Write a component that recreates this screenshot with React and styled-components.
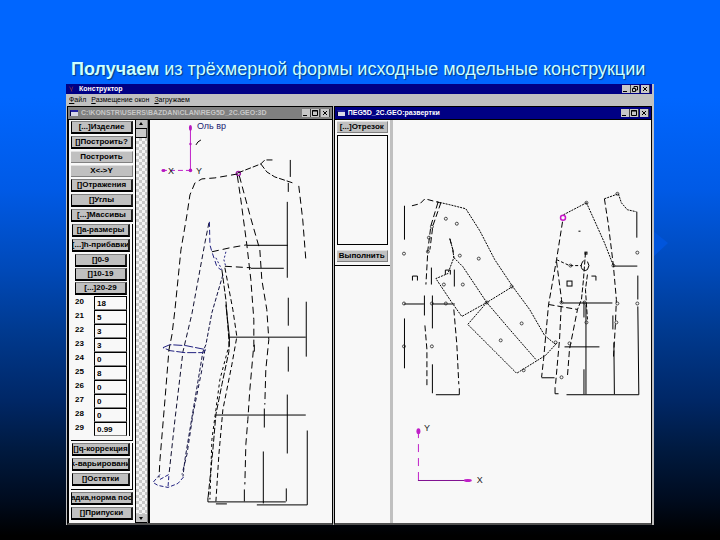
import React, { useState } from 'react';
import styled, { createGlobalStyle } from 'styled-components';

const buttonsTop = ['[...]Изделие', '[]Построить?'];
const buttonsFlat = ['Построить', 'X<->Y'];
const buttonsMid = ['[]Отражения', '[]Углы', '[...]Массивы'];
const ranges = ['[]0-9', '[]10-19', '[...]20-29'];
const initFields = {
	20: '18',
	21: '5',
	22: '3',
	23: '3',
	24: '0',
	25: '8',
	26: '0',
	27: '0',
	28: '0',
	29: '0.99',
};

const Controls = ({ restore }) => (
	<ControlRow>
		<Control aria-label='Minimize'>
			<svg viewBox='0 0 8 8' width='8' height='8'>
				<path d='M1 6.5h4' />
			</svg>
		</Control>
		<Control aria-label='Maximize'>
			<svg viewBox='0 0 8 8' width='8' height='8'>
				{restore ? (
					<path d='M3 3.5V1.5H6.5V5H5M1.5 3.5H4.5V6.5H1.5z' />
				) : (
					<path d='M1.5 1.5H6.5V6.5H1.5zM1 2h6' />
				)}
			</svg>
		</Control>
		<Control $apart aria-label='Close'>
			<svg viewBox='0 0 8 8' width='8' height='8'>
				<path d='M2 2l4 4M6 2l-4 4' />
			</svg>
		</Control>
	</ControlRow>
);

const Model = () => (
	<Drawing viewBox='150 120 182 402' aria-label='3D'>
		<g stroke='#c020c8'>
			<path d='M190.500 127V170.500' />
			<path d='M162 170.500H190' strokeDasharray='5 3' />
		</g>
		<g fill='#b818c0' stroke='none'>
			<ellipse cx='190.500' cy='128' rx='1.500' ry='3' />
			<circle cx='190.500' cy='144' r='1.200' />
			<circle cx='190.500' cy='170.500' r='1.800' />
			<ellipse cx='163.500' cy='170.500' rx='2' ry='1.500' />
		</g>
		<circle cx='238.500' cy='173.500' r='2' stroke='#a020a8' strokeWidth='1.500' />
		<path d='M196 145l2-3 3-2' />
		<g stroke='#202080' fill='none' strokeDasharray='5 3'>
			<path d='M209 223L205 243 192 314 183 352 175 420 169 475' stroke='#101030' />
			<path d='M209.500 222L210 245 212 252 217 267 221 270' />
			<path d='M226 252L224 260 226 267M216 258L222 270' strokeDasharray='2 2' />
			<path d='M223 275L212 313 206 345 203 352 195 400 185 460 183 477' strokeDasharray='4 2' stroke='#101040' />
			<path d='M205 350L202 370 193 415 187 455 182 475' strokeDasharray='4 3' stroke='#101040' />
			<path d='M163 348L170 345 186 346 206 350 203 353 185 353 170 351 163 348' strokeDasharray='9 2' />
			<path d='M160 475L153 483 158 486 168 488 178 484 185 476M160 480L169 475 168 488' strokeDasharray='4 2' />
		</g>
		<g stroke='#000' fill='none' strokeDasharray='7 4'>
			<path d='M238 174L215 178 202 179 195 183 190 195 187 215 181 250 175 310 172 335 169 350 165 400 160 460 159 478' />
			<path d='M237.500 176L241 200 247 245 251 280 254 320 254 345 250 390 248 420 246 445 245 485' />
			<path d='M239.500 176L250 215 260 250 262 280 267 310 269 340 266 370 265 405' />
			<path d='M222 270L226 300 229 340 229 352 222 385 216 415 213 450 208 500' strokeDasharray='6 2' />
			<path d='M225 268L233 310 237 337 232 365 223 410 219 455 216 502' strokeDasharray='5 3' />
			<path d='M228 350L220 380 216 410 212 440 210 500' strokeDasharray='3 3' />
			<path d='M238 173L261 164 265 160H273M261 164L267 172 275 177 293 183' strokeDasharray='6 2' />
			<path d='M212 252L230 248 247 245M225 266.500L251 268' />
			<path d='M299 186L303 220 306 259' />
		</g>
		<path
			stroke='#000'
			fill='none'
			d='M247 245.500H288M251 268.500H284M290.500 160V177M288.500 183V192M287.500 202V278M288.500 298V326M288.500 347V372M287.500 395V454M286.500 489V502M306.500 302V357M229 337.500H306M216 415.500H306M264.500 409V428M263.500 452V504M307.500 431V505.500H257M208 498V502.500H286M216 504.500H227M244.500 490V502M226 305L229.500 337V347M254.500 345V352'
		/>
		<AxisText x='197' y='129' $navy>Оль вр</AxisText>
		<AxisText x='168' y='174'>X</AxisText>
		<AxisText x='196' y='174'>Y</AxisText>
	</Drawing>
);

const points = [
	[404, 254], [404, 304], [404, 347], [432, 347], [432, 304], [446, 219], [457, 224],
	[460, 256], [479, 259], [463, 285], [444, 285], [446, 304], [522, 324], [501, 341],
	[524, 371], [512, 287], [487, 303], [432, 227], [429, 238], [428, 252], [587, 323],
	[617, 323], [618, 304], [638, 304], [638, 253], [562, 303], [562, 378], [570, 344],
	[585, 303], [614, 266], [556, 343], [571, 266], [587, 203], [618, 194],
];

const Flat = () => (
	<Drawing viewBox='393 120 259 404' aria-label='развертки'>
		<g stroke='#000' fill='none' strokeDasharray='2 1'>
			<path d='M437 202L450 205 466 209 480 231 495 260 513 287 530 310 545 336 556 345' />
			<path d='M454 258L463 267 487 303 510 330 537 361M450 239L453 250 454 258 448 274 436 279 452 303 462 317 487 303 513 287' />
			<path d='M487 303L468 325 495 352 517 374 546 356 558 343' />
			<path d='M587 203L605 243 614 266M564 215L587 203 M605 199L619 194 622 203 628 210 637 212' />
			<path d='M557 260L570 266 582 266' strokeDasharray='3 2' />
		</g>
		<g stroke='#000' fill='none' strokeDasharray='6 3'>
			<path d='M412 206L420 204 425 199 440 203' />
			<path d='M438 203L431 226 428 250 426 285' />
			<path d='M441 203L433 226 430 250' />
			<path d='M450 239L453 250 454 258' />
			<path d='M425 326L427 350 427 388M454 310L457 345 459 385' />
			<path d='M563 222L557 260 549 305 544 360 542 378' />
			<path d='M557 262L562 300 560 340 556 385' />
			<path d='M549 305L578 310 570 350 568 376' />
			<path d='M605 199L609 225 614 266 617 300 616 325 614 360' />
			<path d='M586 253L584 280 582 300 578 310M588 275L586 290 588 320' strokeDasharray='5 2' />
		</g>
		<path
			stroke='#000'
			fill='none'
			d='M404.500 206V240M404.500 319V369M404 304.500H424M424.500 296V316M432 304.500H455M432.500 296V329M431.500 268V285M432.500 365V394M436 395.500H459.500V389M454.500 270V287M412.500 281V276.500H417.500V281M445.500 275V270.500H450.500V275M614 266.500H638M637.500 212V238M638.500 276V300M638.500 307L639.500 395.500H567M563 303.500H613M565 347.500H600M584.500 302V318M586.500 305V395M584.500 370V395M613.500 316V330M614.500 343L615 395M542 378.500H555M555.500 388V394.500H559M592 276.500H596.500V281'
		/>
		<g stroke='#000' fill='none'>
			<rect x='567.500' y='281.500' width='5' height='5' />
			<rect x='585.500' y='252.500' width='2' height='2' />
			<path d='M584 261q-4 5-1 9q3 2 5 0q3-4 0-8M579 231.500h2' />
		</g>
		{points.map(([x, y]) => (
			<circle key={`${x}-${y}`} cx={x} cy={y} r='1.500' stroke='#222' strokeWidth='0.800' fill='none' />
		))}
		<circle cx='563.500' cy='218' r='2.500' stroke='#c818c8' strokeWidth='1.500' fill='none' />
		<g stroke='#c020c8'>
			<path d='M418.500 481V432' strokeDasharray='8 6' />
			<path d='M418 481.500H468' stroke='#801090' />
		</g>
		<g fill='#c020c8' stroke='none'>
			<ellipse cx='418.500' cy='432' rx='2' ry='3' />
			<ellipse cx='468' cy='481.500' rx='4' ry='1.500' />
		</g>
		<AxisText x='424' y='432'>Y</AxisText>
		<AxisText x='477' y='484'>X</AxisText>
	</Drawing>
);

const App = () => {
	const [fields, setFields] = useState(initFields);

	return (
		<Page>
			<GlobalStyle />
			<Heading>
				<b>Получаем</b> из трёхмерной формы исходные модельные конструкции
			</Heading>
			<Stage>
				<Pointer viewBox='0 0 15 26'>
					<path d='M0 0L15 12 0 26z' fill='#0055dc' />
				</Pointer>
				<Main>
					<TitleBar $main>
						<AppIcon viewBox='0 0 10 8'>
							<path d='M2 1l3 6M6 1L4 7' stroke='#803050' />
						</AppIcon>
						<Caption>Конструктор</Caption>
						<Controls restore />
					</TitleBar>
					<MenuBar>
						<MenuItem>Файл</MenuItem>
						<MenuItem>Размещение окон</MenuItem>
						<MenuItem>Загружаем</MenuItem>
					</MenuBar>
					<Windows>
						<Child>
							<TitleBar $inactive>
								<SysIcon />
								<Caption>C:\KONSTR\USERS\BAZDAN\CLAN\REG5D_2C.GEO:3D</Caption>
								<Controls />
							</TitleBar>
							<Body>
								<Side>
									{buttonsTop.map((el) => (
										<Tool key={el}>{el}</Tool>
									))}
									{buttonsFlat.map((el) => (
										<Tool key={el} $flat>
											{el}
										</Tool>
									))}
									{buttonsMid.map((el) => (
										<Tool key={el}>{el}</Tool>
									))}
									<Group>
										<Tool>[]a-размеры</Tool>
										<Tool>[...]h-прибавки</Tool>
										<Range>
											{ranges.map((el) => (
												<Tool key={el}>{el}</Tool>
											))}
											{Object.keys(fields).map((key) => (
												<Field key={key}>
													<span>{key}</span>
													<input
														value={fields[key]}
														onChange={(e) =>
															setFields({ ...fields, [key]: e.target.value })
														}
													/>
												</Field>
											))}
										</Range>
									</Group>
									<Group $last>
										<Tool>[]q-коррекция</Tool>
										<Tool>k-варьировани</Tool>
										<Tool>[]Остатки</Tool>
									</Group>
									<Tool>адка,норма пос</Tool>
									<Tool>[]Припуски</Tool>
								</Side>
								<Scroll>
									<ScrollButton aria-label='Up'>
										<svg viewBox='0 0 8 8' width='8' height='8'>
											<path d='M4 2L6 5H2z' />
										</svg>
									</ScrollButton>
									<Thumb />
									<Track />
									<ScrollButton aria-label='Down'>
										<svg viewBox='0 0 8 8' width='8' height='8'>
											<path d='M4 6L6 3H2z' />
										</svg>
									</ScrollButton>
								</Scroll>
								<Canvas>
									<Model />
								</Canvas>
							</Body>
						</Child>
						<Child $wide>
							<TitleBar>
								<SysIcon />
								<Caption>ПEG5D_2C.GEO:развертки</Caption>
								<Controls />
							</TitleBar>
							<Body>
								<Panel>
									<PanelTop>
										<Tool $flat>[...]Отрезок</Tool>
										<List />
										<Tool $flat>Выполнить</Tool>
									</PanelTop>
								</Panel>
								<Canvas $plain>
									<Flat />
								</Canvas>
							</Body>
						</Child>
					</Windows>
				</Main>
			</Stage>
		</Page>
	);
};

const GlobalStyle = createGlobalStyle`
	* {
		box-sizing: border-box;
	}
	body {
		margin: 0;
		font-family: 'Liberation Sans', Arial, sans-serif;
	}
`;

const Page = styled.div`
	min-height: 100vh;
	padding: 58px 66px 16px;
	display: flex;
	flex-direction: column;
	background: linear-gradient(
		#0066ff 18%,
		#005ae6 35%,
		#0049b8 50%,
		#003a90 61%,
		#002766 74%,
		#001a40 83%,
		#000c20 92%,
		#000000 99%
	);
`;

const Heading = styled.h1`
	margin: 0;
	padding-left: 5px;
	height: 26px;
	line-height: 23px;
	font-size: 18px;
	font-weight: normal;
	white-space: nowrap;
	color: #ccffff;
	text-shadow: 1px 1px 1px #003a80;
`;

const Stage = styled.div`
	position: relative;
	flex: 1;
	display: flex;
`;

const Pointer = styled.svg`
	position: absolute;
	left: 100%;
	top: 147px;
	width: 14px;
	height: 26px;
`;

const Main = styled.div`
	flex: 1;
	min-width: 0;
	display: flex;
	flex-direction: column;
	background-color: #c0c0c0;
	border-right: 2px solid #c0c0c0;
`;

const TitleBar = styled.div`
	display: flex;
	align-items: center;
	height: ${(p) => (p.$main ? 10 : 12)}px;
	padding: 0 2px;
	gap: 3px;
	color: ${(p) => (p.$inactive ? '#c8c8c8' : '#ffffff')};
	background-color: ${(p) => (p.$inactive ? '#808080' : '#000084')};
`;

const Caption = styled.div`
	flex: 1;
	min-width: 0;
	overflow: hidden;
	white-space: nowrap;
	font-size: 7px;
	line-height: 10px;
	font-weight: bold;
`;

const AppIcon = styled.svg`
	width: 8px;
	height: 8px;
`;

const SysIcon = styled.div`
	width: 8px;
	height: 6px;
	background-color: #d8d8e8;
	border-top: 2px solid #2020a0;
	border-left: 1px solid #000040;
`;

const ControlRow = styled.div`
	display: flex;
`;

const Control = styled.button`
	width: 9px;
	height: 8px;
	padding: 0;
	margin-left: ${(p) => (p.$apart ? 1 : 0)}px;
	border: 0;
	border-right: 1px solid #404040;
	background-color: #c8c8c8;
	svg {
		display: block;
		fill: none;
		stroke: #000000;
	}
`;

const MenuBar = styled.div`
	display: flex;
	gap: 5px;
	height: 12px;
	padding-left: 3px;
`;

const MenuItem = styled.button`
	padding: 0;
	border: 0;
	background: none;
	font-family: inherit;
	font-size: 7px;
	line-height: 12px;
	color: #000000;
	&::first-letter {
		text-decoration: underline;
	}
`;

const Windows = styled.div`
	flex: 1;
	display: flex;
	gap: 1px;
	padding-left: 1px;
`;

const Child = styled.div`
	flex: ${(p) => (p.$wide ? 319 : 266)} 1 0;
	min-width: 0;
	display: flex;
	flex-direction: column;
	border: 1px solid #000000;
	border-bottom: 2px solid #505050;
`;

const Body = styled.div`
	flex: 1;
	display: flex;
	background-color: #f8f8f8;
	border-top: 1px solid #000000;
`;

const Side = styled.div`
	width: 68px;
	flex-shrink: 0;
	padding: 1px 2px 0 2px;
	display: flex;
	flex-direction: column;
	gap: 2px;
	border-left: 1px solid #000000;
	border-right: 1px solid #000000;
`;

const Tool = styled.button`
	display: flex;
	justify-content: center;
	height: ${(p) => (p.$flat ? 12 : 13)}px;
	flex-shrink: 0;
	padding: 0;
	overflow: hidden;
	white-space: nowrap;
	font-family: inherit;
	font-size: 8px;
	line-height: 10px;
	font-weight: bold;
	color: #000000;
	background-color: #c0c0c0;
	border: 0 solid #000000;
	border-top: 1px solid ${(p) => (p.$flat ? '#e0e0e0' : '#808080')};
	border-width: ${(p) => (p.$flat ? '1px 1px 1px 0' : '1px 2px 2px 1px')};
	border-bottom-color: ${(p) => (p.$flat ? '#808080' : '#000000')};
	border-right-color: ${(p) => (p.$flat ? '#808080' : '#202020')};
`;

const Group = styled.div`
	display: flex;
	flex-direction: column;
	gap: 2px;
	padding: 0 2px ${(p) => (p.$last ? 3 : 4)}px 1px;
	border-right: 1px solid #000000;
	border-bottom: 1px solid #000000;
`;

const Range = styled.div`
	display: flex;
	flex-direction: column;
	padding: 0 2px 0 3px;
	border-right: 1px solid #000000;
	${Tool} {
		margin-bottom: 1px;
	}
`;

const Field = styled.label`
	display: flex;
	justify-content: space-between;
	height: 14px;
	font-size: 8px;
	line-height: 12px;
	font-weight: bold;
	input {
		width: 33px;
		height: 14px;
		padding: 0 2px;
		font-family: inherit;
		font-size: 8px;
		font-weight: bold;
		background-color: #f8f8f8;
		border: 1px solid #000000;
		border-bottom-color: #808080;
		border-radius: 0;
	}
`;

const Scroll = styled.div`
	width: 12px;
	flex-shrink: 0;
	display: flex;
	flex-direction: column;
	border-right: 1px solid #808080;
`;

const ScrollButton = styled.button`
	height: 9px;
	padding: 0 1px;
	border: 0;
	border-bottom: 1px solid #000000;
	background-color: #c0c0c0;
	svg {
		display: block;
	}
`;

const Thumb = styled.div`
	height: 9px;
	background-color: #c8c8c8;
	border-right: 1px solid #404040;
	border-bottom: 1px solid #000000;
`;

const Track = styled.div`
	flex: 1;
	background: repeating-conic-gradient(#c8c8c8 0 25%, #f4f4f4 0 50%) 0 0 / 6px 6px;
`;

const Canvas = styled.div`
	flex: 1;
	min-width: 0;
	border-left: ${(p) => (p.$plain ? '3px solid #c0c0c0' : '2px solid #000000')};
`;

const Drawing = styled.svg`
	display: block;
	width: 100%;
	fill: none;
	stroke: #000000;
`;

const AxisText = styled.text`
	font-family: 'Liberation Sans', Arial, sans-serif;
	font-size: 9px;
	stroke: none;
	fill: ${(p) => (p.$navy ? '#202070' : '#202020')};
`;

const Panel = styled.div`
	width: 55px;
	flex-shrink: 0;
`;

const PanelTop = styled.div`
	display: flex;
	flex-direction: column;
	padding: 1px 2px 3px;
	border-bottom: 1px solid #000000;
`;

const List = styled.div`
	height: 110px;
	margin: 2px 0 5px;
	border: 1px solid #000000;
`;

export default App;
